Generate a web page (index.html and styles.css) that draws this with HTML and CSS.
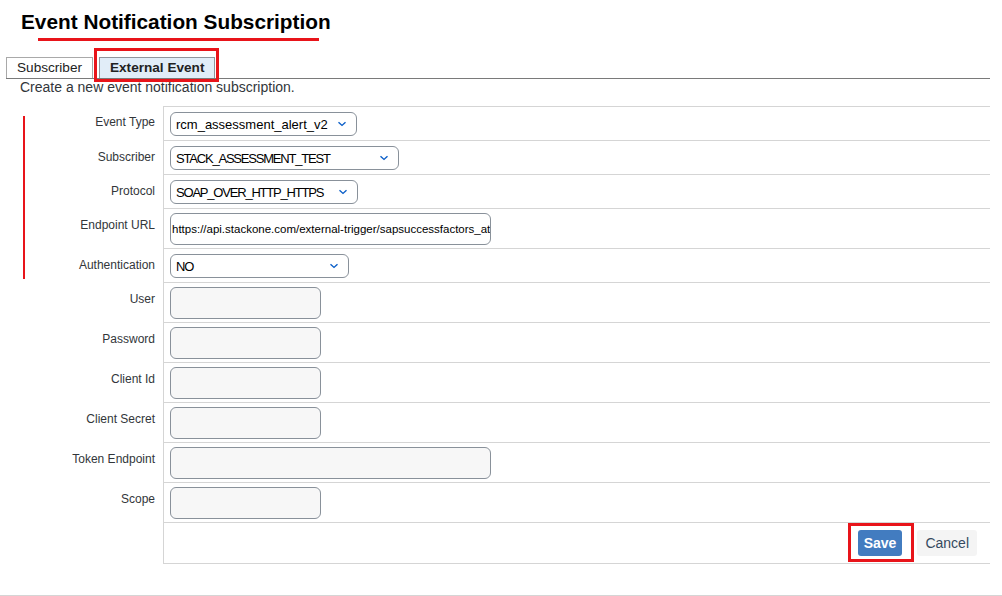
FILE: index.html
```html
<!doctype html>
<html lang="en">
  <head>
    <meta charset="UTF-8" />
    <meta name="viewport" content="width=device-width, initial-scale=1.0" />
    <title>Event Notification Subscription</title>
    <link rel="stylesheet" href="styles.css">
  </head>
  <body>

    <div class="page-title">
      <h1>Event Notification Subscription</h1>
    </div>

    <div class="tab-bar">
      <div class="tab">Subscriber</div>
      <div class="tab tab-active">External Event</div>
    </div>

    <p class="description">Create a new event notification subscription.</p>

    <div class="form">
      <div class="form-group marked">
        <div class="form-row">
          <label class="form-label">Event Type</label>
          <div class="form-field">
            <div class="select select-event">rcm_assessment_alert_v2
              <svg class="chevron" viewBox="0 0 10 6"><polyline points="1.5,1.2 5,4.4 8.5,1.2" /></svg>
            </div>
          </div>
        </div>
        <div class="form-row">
          <label class="form-label">Subscriber</label>
          <div class="form-field">
            <div class="select select-caps select-subscriber">STACK_ASSESSMENT_TEST
              <svg class="chevron" viewBox="0 0 10 6"><polyline points="1.5,1.2 5,4.4 8.5,1.2" /></svg>
            </div>
          </div>
        </div>
        <div class="form-row">
          <label class="form-label">Protocol</label>
          <div class="form-field">
            <div class="select select-caps select-protocol">SOAP_OVER_HTTP_HTTPS
              <svg class="chevron" viewBox="0 0 10 6"><polyline points="1.5,1.2 5,4.4 8.5,1.2" /></svg>
            </div>
          </div>
        </div>
        <div class="form-row row-tall">
          <label class="form-label">Endpoint URL</label>
          <div class="form-field">
            <div class="text-input input-wide input-url">https://api.stackone.com/external-trigger/sapsuccessfactors_at</div>
          </div>
        </div>
        <div class="form-row">
          <label class="form-label">Authentication</label>
          <div class="form-field">
            <div class="select select-caps select-auth">NO
              <svg class="chevron" viewBox="0 0 10 6"><polyline points="1.5,1.2 5,4.4 8.5,1.2" /></svg>
            </div>
          </div>
        </div>
      </div>

      <div class="form-row row-tall">
        <label class="form-label">User</label>
        <div class="form-field"><div class="text-input"></div></div>
      </div>
      <div class="form-row row-tall">
        <label class="form-label">Password</label>
        <div class="form-field"><div class="text-input"></div></div>
      </div>
      <div class="form-row row-tall">
        <label class="form-label">Client Id</label>
        <div class="form-field"><div class="text-input"></div></div>
      </div>
      <div class="form-row row-tall">
        <label class="form-label">Client Secret</label>
        <div class="form-field"><div class="text-input"></div></div>
      </div>
      <div class="form-row row-tall">
        <label class="form-label">Token Endpoint</label>
        <div class="form-field"><div class="text-input input-wide"></div></div>
      </div>
      <div class="form-row row-tall">
        <label class="form-label">Scope</label>
        <div class="form-field"><div class="text-input"></div></div>
      </div>
      <div class="form-row">
        <div class="form-label"></div>
        <div class="form-field form-actions">
          <button class="btn btn-save">Save</button>
          <button class="btn btn-cancel">Cancel</button>
        </div>
      </div>
    </div>

    <div class="page-footer"></div>

  </body>
</html>
```

FILE: styles.css
```css
body {
  margin: 0;
  background-color: #ffffff;
  font-family: "Liberation Sans", Arial, sans-serif;
  color: #32363a;
}

/* title with red marker line */
.page-title {
  padding: 10px 0 0 21px;
  height: 38px;
  box-sizing: border-box;
}
.page-title h1 {
  position: relative;
  display: inline-block;
  margin: 0;
  font-size: 20.8px;
  line-height: 24px;
  font-weight: bold;
  color: #000000;
}
.page-title h1::after {
  content: "";
  position: absolute;
  left: 17px;
  right: 12px;
  top: 28px;
  height: 3px;
  background-color: #e8141a;
}

/* tabs */
.tab-bar {
  display: flex;
  align-items: flex-end;
  gap: 6px;
  margin: 19px 12px 0 6px;
  border-bottom: 1px solid #7a7a7a;
}
.tab {
  height: 20px;
  padding: 0 10px;
  border: 1px solid #a9a9a9;
  border-bottom: none;
  font-size: 13.6px;
  line-height: 20px;
  color: #222222;
  background-color: #ffffff;
}
.tab-active {
  position: relative;
  background-color: #e1edf8;
  font-weight: bold;
  border-color: #8f959c;
}
.tab-active::after {
  content: "";
  position: absolute;
  left: -6px;
  right: -5px;
  top: -10px;
  bottom: -4px;
  border: 3px solid #e8141a;
}

.description {
  margin: 0 0 0 20px;
  font-size: 14px;
  line-height: 16px;
  color: #32363a;
}

/* form */
.form {
  margin: 11px 12px 0 0;
}
.form-group {
  position: relative;
}
.marked::before {
  content: "";
  position: absolute;
  left: 23px;
  width: 2px;
  top: 10px;
  bottom: 4px;
  background-color: #e8141a;
}
.form-row {
  display: grid;
  grid-template-columns: 163px 1fr;
}
.form-row:first-child .form-field {
  border-top: 1px solid #d5d5d5;
}
.form-label {
  padding: 9px 8px 0 0;
  text-align: right;
  font-size: 12px;
  line-height: 14px;
  color: #32363a;
}
.form-field {
  display: flex;
  align-items: center;
  box-sizing: border-box;
  height: 34px;
  padding: 0 6px;
  border-left: 1px solid #d5d5d5;
  border-bottom: 1px solid #d5d5d5;
}
.form-row:first-child .form-field {
  height: 35px;
}
.row-tall .form-field {
  height: 40px;
}

.select {
  position: relative;
  height: 24px;
  box-sizing: border-box;
  padding: 0 0 0 5px;
  border: 1px solid #89919a;
  border-radius: 6px;
  background-color: #ffffff;
  font-size: 13px;
  line-height: 23px;
  color: #000000;
}
.select-caps {
  letter-spacing: -1.2px;
}
.select-event { width: 187px; }
.select-subscriber { width: 229px; }
.select-protocol { width: 188px; }
.select-auth { width: 179px; margin-top: 1px; }
.chevron {
  position: absolute;
  right: 9px;
  top: 8px;
  width: 10px;
  height: 6px;
  fill: none;
  stroke: #0a5ec8;
  stroke-width: 1.4;
}

.text-input {
  width: 151px;
  height: 32px;
  box-sizing: border-box;
  border: 1px solid #89919a;
  border-radius: 6px;
  background-color: #f7f7f7;
}
.input-wide {
  width: 321px;
}
.input-url {
  background-color: #ffffff;
  padding-left: 1px;
  overflow: hidden;
  white-space: nowrap;
  font-size: 11.5px;
  line-height: 30px;
  color: #000000;
}

.form-actions {
  justify-content: flex-end;
  gap: 15px;
  height: 41px;
  padding-right: 13px;
}
.btn {
  height: 26px;
  border: none;
  border-radius: 3px;
  font-family: "Liberation Sans", Arial, sans-serif;
  font-size: 14px;
  padding: 0 6px;
}
.btn-save {
  position: relative;
  background-color: #427cc0;
  color: #ffffff;
  font-weight: bold;
}
.btn-save::after {
  content: "";
  position: absolute;
  left: -10px;
  right: -12px;
  top: -7px;
  bottom: -6px;
  border: 3px solid #e8141a;
}
.btn-cancel {
  background-color: #f4f4f4;
  color: #354a5f;
  padding: 0 8px;
}

.page-footer {
  margin-top: 31px;
  border-top: 1px solid #d5d5d5;
}
```
